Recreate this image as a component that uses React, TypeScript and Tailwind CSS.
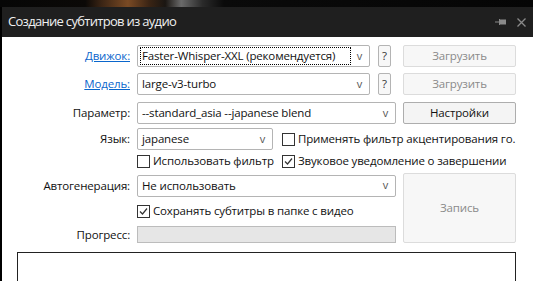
import React from "react";

const font = { fontFamily: '"Open Sans", "Noto Sans", sans-serif' };

function Combo({ text, w, focused }: { text: string; w: string; focused?: boolean }) {
  return (
    <div className={`${w} h-[22px] flex items-center justify-between rounded-[2px] border border-[#b4b4b4] bg-white pl-[2px] pr-[7px] text-[11.5px] tracking-[-0.15px] text-[#111]`}>
      <div className={`h-[18px] flex items-center px-[1px] ${focused ? "border border-dotted border-black w-[211px]" : "border border-transparent"}`}>
        <span className="whitespace-nowrap">{text}</span>
      </div>
      <span className="text-[11px] text-[#555]">v</span>
    </div>
  );
}

function Btn({ text, disabled, h = "h-[22px]" }: { text: string; disabled?: boolean; h?: string }) {
  return (
    <div
      className={`w-[113px] ${h} flex items-center justify-center rounded-[2px] border text-[11.5px] tracking-[-0.15px] ${
        disabled ? "border-[#dcdcdc] bg-[#f7f7f7] text-[#8a8a8a]" : "border-[#adadad] bg-[#f4f4f4] text-[#111]"
      }`}
    >
      {text}
    </div>
  );
}

function Check({ text, checked }: { text: string; checked?: boolean }) {
  return (
    <div className="flex items-center gap-[3px] text-[11.5px] tracking-[-0.15px] text-[#111] whitespace-nowrap">
      <div className="w-[13px] h-[13px] shrink-0 border border-[#333] bg-white flex items-center justify-center">
        {checked && (
          <svg width="11" height="11" viewBox="0 0 11 11">
            <polyline points="2,5.5 4.5,8 9,2.5" fill="none" stroke="#333" strokeWidth="1.2" />
          </svg>
        )}
      </div>
      <span>{text}</span>
    </div>
  );
}

function Label({ text, link }: { text: string; link?: boolean }) {
  return (
    <div className={`w-[128px] shrink-0 text-right text-[11.5px] tracking-[-0.15px] ${link ? "text-[#0a66cc] underline" : "text-[#111]"}`}>
      {text}
    </div>
  );
}

function Help() {
  return (
    <div className="ml-[8px] w-[13px] h-[22px] rounded-[2px] border border-[#b4b4b4] bg-[#f7f7f7] flex items-center justify-center text-[11.5px] text-[#333]">?</div>
  );
}

export default function App() {
  return (
    <div className="w-[533px] h-[281px] overflow-hidden bg-black flex flex-col" style={font}>
      <div className="h-[7px] shrink-0 bg-[linear-gradient(90deg,#060606_0%,#0b0907_16%,#3a2414_19%,#7a4a24_24%,#3a2414_28%,#1a1612_31%,#6a6a6a_34%,#2a2a2a_38%,#0a0a0a_42%,#050505_100%)]" />
      <div className="flex-1 flex pl-[2px]">
        <div className="flex-1 flex flex-col">
          <div className="h-[30px] shrink-0 bg-[#1f1f1f] flex items-center pl-[6px] pr-[7px]">
            <span className="text-[13px] tracking-[-0.7px] text-[#f0f0f0]">Создание субтитров из аудио</span>
            <div className="ml-auto flex items-center gap-[11px]">
              <svg width="11" height="8" viewBox="0 0 11 8">
                <rect x="0" y="3.5" width="5" height="1" fill="#8a8a8a" />
                <rect x="4" y="1" width="1" height="6" fill="#8a8a8a" />
                <rect x="5" y="1.5" width="6" height="5" fill="#8a8a8a" />
              </svg>
              <svg width="9" height="9" viewBox="0 0 9 9">
                <path d="M0.5 0.5 L8.5 8.5 M8.5 0.5 L0.5 8.5" stroke="#8a8a8a" strokeWidth="1.3" />
              </svg>
            </div>
          </div>
          <div className="flex-1 bg-white flex flex-col pt-[8px]">
            <div className="flex items-center h-[22px]">
              <Label text="Движок:" link />
              <div className="ml-[7px]"><Combo text="Faster-Whisper-XXL (рекомендуется)" w="w-[233px]" focused /></div>
              <Help />
              <div className="ml-[12px]"><Btn text="Загрузить" disabled /></div>
            </div>
            <div className="flex items-center h-[22px] mt-[6px]">
              <Label text="Модель:" link />
              <div className="ml-[7px]"><Combo text="large-v3-turbo" w="w-[233px]" /></div>
              <Help />
              <div className="ml-[12px]"><Btn text="Загрузить" disabled /></div>
            </div>
            <div className="flex items-center h-[22px] mt-[7px]">
              <Label text="Параметр:" />
              <div className="ml-[7px]"><Combo text="--standard_asia --japanese blend" w="w-[259px]" /></div>
              <div className="ml-[7px]"><Btn text="Настройки" /></div>
            </div>
            <div className="flex items-center h-[22px] mt-[4px]">
              <Label text="Язык:" />
              <div className="ml-[7px]"><Combo text="japanese" w="w-[136px]" /></div>
              <div className="ml-[9px]"><Check text="Применять фильтр акцентирования го." /></div>
            </div>
            <div className="flex items-center h-[18px] mt-[2px]">
              <div className="w-[135px] shrink-0" />
              <div className="w-[145px] shrink-0"><Check text="Использовать фильтр" /></div>
              <Check text="Звуковое уведомление о завершении" checked />
            </div>
            <div className="flex mt-[3px]">
              <div className="flex flex-col">
                <div className="flex items-center h-[23px] mt-[1px]">
                  <Label text="Автогенерация:" />
                  <div className="ml-[7px]"><Combo text="Не использовать" w="w-[259px]" /></div>
                </div>
                <div className="flex items-center h-[18px] mt-[5px]">
                  <div className="w-[135px] shrink-0" />
                  <Check text="Сохранять субтитры в папке с видео" checked />
                </div>
                <div className="flex items-center h-[17px] mt-[6px]">
                  <Label text="Прогресс:" />
                  <div className="ml-[7px] w-[259px] h-[17px] border border-[#bcbcbc] bg-[#e6e6e6]" />
                </div>
              </div>
              <div className="ml-[7px]"><Btn text="Запись" disabled h="h-[70px]" /></div>
            </div>
            <div className="mt-[9px] ml-[15px] w-[499px] flex-1 border border-[#222] border-b-0 bg-white" />
          </div>
        </div>
      </div>
    </div>
  );
}
